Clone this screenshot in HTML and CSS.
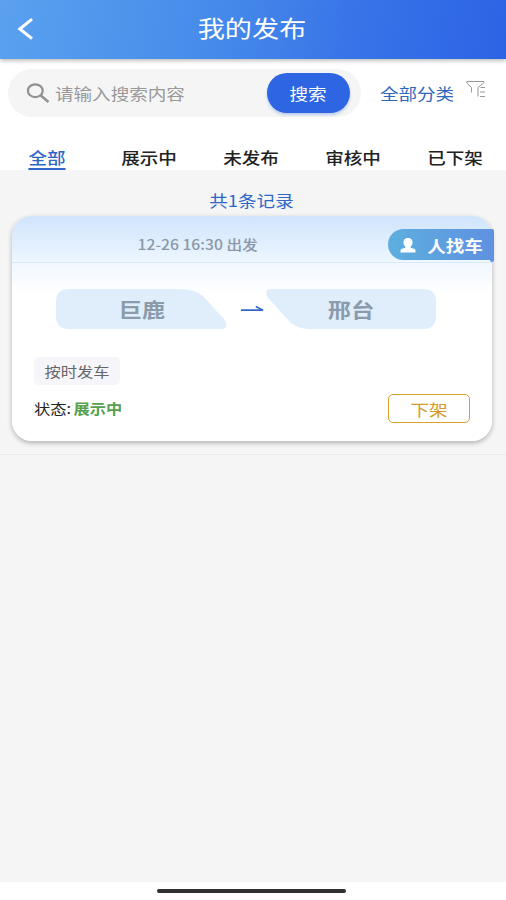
FILE: index.html
```html
<!DOCTYPE html>
<html lang="zh-CN">
<head>
<meta charset="utf-8">
<title>我的发布</title>
<link rel="stylesheet" href="styles.css">
</head>
<body>
<header class="header">
  <svg class="back" width="18" height="24" viewBox="0 0 18 24"><path d="M15 2.200 2.800 12l12.200 9.600" fill="none" stroke="#fff" stroke-width="3"/></svg>
  <h1 class="title"><span class="wide">我的发布</span></h1>
</header>
<section class="search-row">
  <div class="search">
    <svg width="24" height="20" viewBox="0 0 24 20" fill="none" stroke="#919191"><ellipse cx="9.300" cy="7.700" rx="7.400" ry="6.400" stroke-width="2.200"/><path d="m14.500 12.300 8 6.700" stroke-width="2.600"/></svg>
    <span class="placeholder wide">请输入搜索内容</span>
    <button class="search-btn"><span class="wide">搜索</span></button>
  </div>
  <div class="category"><span class="wide">全部分类</span></div>
  <svg class="filter" width="20" height="18" viewBox="0 0 20 18" fill="none" stroke="#999" stroke-width="1"><path d="M5.500 12.500V7.500L.8 3V1.500h17V3L12 7.500v9M14.500 7.500H19M14 12H19M14 16.500h5"/></svg>
</section>
<nav class="tabs">
  <a class="tab first active"><span class="wide">全部</span></a>
  <a class="tab"><span class="wide">展示中</span></a>
  <a class="tab"><span class="wide">未发布</span></a>
  <a class="tab"><span class="wide">审核中</span></a>
  <a class="tab"><span class="wide">已下架</span></a>
</nav>
<main class="content">
  <div class="list">
    <p class="count"><span class="wide">共1条记录</span></p>
    <article class="card">
      <div class="card-head">
        <div class="time"><span class="wide">12-26 16:30 出发</span></div>
        <div class="badge">
          <svg width="16" height="15" viewBox="0 0 16 15"><path d="M8 0c3 0 4.600 1.900 4.600 4.400 0 1.900-1 3.300-2.200 4.300.2 1.100 1.300 1.400 2.800 1.800 1.600.4 2.300 1 2.300 2.500v1.500H.5V13c0-1.500.7-2.100 2.300-2.500 1.500-.4 2.600-.7 2.800-1.800-1.200-1-2.200-2.400-2.200-4.300C3.400 1.900 5 0 8 0Z" fill="#fff"/></svg>
          <span class="wide">人找车</span>
        </div>
      </div>
      <div class="route">
        <div class="place">
          <svg class="shape" width="171" height="40" viewBox="0 0 171 40"><path d="M13 0H124Q138 0 147 7L168 30Q174 40 165 40H13Q0 40 0 27V13Q0 0 13 0Z" fill="#e0eefc"/></svg>
          <span class="wide">巨鹿</span>
        </div>
        <svg class="arrow" width="24" height="8" viewBox="0 0 24 8"><path d="M0 5.100h22L14.800 1.500" fill="none" stroke="#3168c6" stroke-width="1.600"/></svg>
        <div class="place">
          <svg class="shape" width="170" height="40" viewBox="0 0 170 40"><path d="M5 0H157Q170 0 170 13V27Q170 40 157 40H43Q32 40 24 33L2 9Q-3 0 5 0Z" fill="#e0eefc"/></svg>
          <span class="wide">邢台</span>
        </div>
      </div>
      <div class="tag"><span class="wide">按时发车</span></div>
      <div class="card-foot">
        <div class="status wide">状态: <b>展示中</b></div>
        <button class="off-btn"><span class="wide">下架</span></button>
      </div>
    </article>
  </div>
</main>
<footer class="home"><div class="bar"></div></footer>
</body>
</html>
```

FILE: styles.css
```css
* { box-sizing: border-box; }
body {
  margin: 0;
  width: 506px;
  height: 900px;
  overflow: hidden;
  display: flex;
  flex-direction: column;
  background: #fff;
  font: 16px/20px "Noto Sans CJK SC", "Noto Sans", sans-serif;
  color: #222;
}
svg { display: block; flex: none; }
button { border: 0; padding: 0; font: inherit; display: flex; align-items: center; justify-content: center; }
.wide { display: inline-block; white-space: nowrap; transform: scaleX(1.16); }

.header {
  flex: none;
  height: 59px;
  display: flex;
  align-items: center;
  padding: 0 17px;
  background: linear-gradient(100deg, #5ba1ef 0%, #468bea 42%, #3975e8 68%, #2c63e5 100%);
  box-shadow: 0 2px 4px rgba(0, 0, 0, .25);
}
.back { margin-top: -2px; }
.title { flex: 1; margin: 0 20px 5px 0; text-align: center; font-size: 23px; line-height: 30px; font-weight: 400; color: #fff; }
.title .wide { transform: scaleX(1.18); }

.search-row { flex: none; height: 68px; display: flex; align-items: flex-start; padding: 10px 0 0 8px; }
.search {
  width: 353px;
  height: 48px;
  display: flex;
  align-items: center;
  padding: 0 11px 0 18px;
  border-radius: 24px;
  background: #f5f5f5;
}
.placeholder { margin: 0 0 0 5px; color: #999; transform-origin: left; }
.search-btn {
  margin-left: auto;
  width: 83px;
  height: 40px;
  border-radius: 20px;
  background: #2d65e2;
  color: #fff;
  box-shadow: 0 2px 3px rgba(45, 101, 226, .3);
}
.category { width: 74px; margin: 14px 0 0 19px; display: flex; justify-content: center; color: #2f67ba; }
.filter { margin: 11px 0 0 12px; }

.tabs { flex: none; height: 43px; display: flex; padding: 20px 0 0 22px; }
.tab { width: 102px; text-align: center; font-weight: 500; }
.tab.first { width: 51px; margin-right: 25px; }
.active { color: #2f67c8; }
.active .wide { height: 23px; border-bottom: 2px solid #2f67c8; }

.content { flex: 1; background: #f5f5f5; }
.list { height: 285px; padding: 20px 14px 0 12px; border-bottom: 1px solid #e9e9e9; }
.count { margin: 0 2px 6px 0; height: 20px; text-align: center; color: #2f67c8; }
.card {
  width: 480px;
  height: 225px;
  border-radius: 20px;
  background: linear-gradient(#d0e4fc 0, #e5f1fe 34px, #f1f8ff 48px, #fff 78px);
  box-shadow: 0 2px 5px rgba(0, 0, 0, .28);
}
.card-head { height: 47px; display: flex; border-bottom: 1px solid #d9e8f8; }
.time { width: 370px; margin: 18px 6px 0 0; text-align: center; font-size: 14px; font-weight: 500; color: #8a98a8; }
.time .wide { transform: translateX(1px) scaleX(1.12); }
.badge {
  position: relative;
  flex: none;
  width: 106px;
  height: 31px;
  margin: 13px -2px 0 0;
  padding: 1px 15px 0 12px;
  display: flex;
  align-items: center;
  justify-content: space-between;
  border-radius: 16px 2px 0 16px;
  background: linear-gradient(90deg, #5dafdf, #5f91e0);
  color: #fff;
  font-weight: 700;
}
.card-head .time { flex: none; margin-right: 6px; }
.badge::after { content: ""; position: absolute; right: 0; top: 30px; width: 4px; height: 3px; background: #5f91e0; border-radius: 0 0 2px 2px; }

.route { display: flex; align-items: center; margin: 26px 0 0 44px; }
.place { position: relative; width: 170px; height: 40px; display: flex; align-items: center; justify-content: center; color: #8c9bab; font-size: 20px; font-weight: 700; padding: 1px 0 0 2px; }
.place:last-child { padding: 1px 1px 0 0; }
.shape { position: absolute; inset: 0; }
.place .wide { position: relative; }
.arrow { margin: 0 1px 0 15px; }
.tag {
  margin: 28px 0 0 22px;
  width: 86px;
  height: 28px;
  display: flex;
  align-items: center;
  justify-content: center;
  border-radius: 5px;
  background: #f5f5fa;
  color: #666;
  font-size: 14px;
}
.card-foot { display: flex; align-items: flex-start; justify-content: space-between; padding: 9px 22px 0; }
.status { margin-top: 4px; font-size: 14px; transform-origin: left; word-spacing: -1px; }
.status b { color: #55a150; }
.off-btn { width: 82px; height: 29px; padding-top: 1px; border: 1.500px solid #d9a12f; border-radius: 5px; background: #fff; color: #d39b27; }

.home { flex: none; height: 18px; padding-top: 7px; }
.bar { width: 189px; height: 4px; margin: 0 auto 0 157px; border-radius: 2px; background: #303030; }
```
